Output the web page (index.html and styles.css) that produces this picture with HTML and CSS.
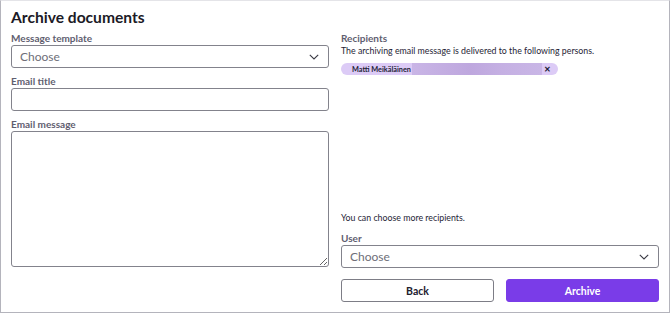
FILE: index.html
```html
<!DOCTYPE html>
<html lang="en">
<head>
<meta charset="utf-8">
<title>Archive documents</title>
<link rel="stylesheet" href="styles.css">
</head>
<body>
<div class="dialog">
  <h1 class="title">Archive documents</h1>
  <div class="columns">
    <div class="col">
      <div class="field">
        <label class="label">Message template</label>
        <div class="select">
          <span class="placeholder">Choose</span>
          <svg class="chev" width="10" height="6" viewBox="0 0 10 6"><path d="M0.8 0.8 L5 5 L9.2 0.8" fill="none" stroke="#3a3a44" stroke-width="1.1"/></svg>
        </div>
      </div>
      <div class="field">
        <label class="label">Email title</label>
        <input class="input" type="text">
      </div>
      <div class="field">
        <label class="label">Email message</label>
        <textarea class="textarea"></textarea>
      </div>
    </div>
    <div class="col right">
      <div class="top">
        <div class="label">Recipients</div>
        <p class="desc">The archiving email message is delivered to the following persons.</p>
        <div class="chip">
          <span class="chip-name">Matti Meikäläinen</span>
          <span class="chip-mail"></span>
          <span class="chip-x">✕</span>
        </div>
      </div>
      <div class="bottom">
        <p class="desc more">You can choose more recipients.</p>
        <div class="field">
          <label class="label">User</label>
          <div class="select">
            <span class="placeholder">Choose</span>
            <svg class="chev" width="10" height="6" viewBox="0 0 10 6"><path d="M0.8 0.8 L5 5 L9.2 0.8" fill="none" stroke="#3a3a44" stroke-width="1.1"/></svg>
          </div>
        </div>
        <div class="buttons">
          <button class="btn back">Back</button>
          <button class="btn primary">Archive</button>
        </div>
      </div>
    </div>
  </div>
</div>
</body>
</html>
```
FILE: styles.css
```css
* { box-sizing: border-box; }
html, body { margin: 0; padding: 0; background: #fff; }
body { font-family: Lato, "Noto Sans", sans-serif; color: #1f1d2b; }

.dialog {
  width: 670px;
  height: 313px;
  border: 1px solid #b4b4bc;
  border-top-color: #e4e4e8;
  padding: 6px 10px 10px 10px;
  display: flex;
  flex-direction: column;
}

.title {
  margin: 0 0 4px 0;
  font-size: 15.6px;
  line-height: 20px;
  font-weight: 700;
  color: #1b1a26;
}

.columns {
  flex: 1;
  display: grid;
  grid-template-columns: 318px 318px;
  column-gap: 12px;
}

.col { display: flex; flex-direction: column; }
.right { justify-content: space-between; }

.field { display: flex; flex-direction: column; margin-bottom: 6px; }

.label {
  display: block;
  font-size: 10px;
  line-height: 14px;
  font-weight: 700;
  color: #5f5e70;
}

.select {
  height: 23px;
  border: 1px solid #83838c;
  border-radius: 3px;
  display: flex;
  align-items: center;
  justify-content: space-between;
  padding: 0 9px 0 8px;
}
.placeholder { font-size: 12px; color: #6e6e78; }
.chev { display: block; }

.input {
  display: block;
  height: 23px;
  border: 1px solid #83838c;
  border-radius: 3px;
  margin: 0;
  padding: 0 8px;
  font: inherit;
}

.textarea {
  display: block;
  height: 136px;
  border: 1px solid #83838c;
  border-radius: 3px;
  margin: 0;
  padding: 4px 8px;
  font: inherit;
  resize: vertical;
}

.desc {
  margin: 0;
  font-size: 8.8px;
  line-height: 11px;
  color: #262435;
}

.chip {
  margin-top: 7px;
  width: 217px;
  height: 12px;
  border-radius: 6px;
  background: #dccbf6;
  display: flex;
  align-items: center;
  padding-left: 11px;
  overflow: hidden;
}
.chip-name {
  flex: 0 0 auto;
  font-size: 7.3px;
  font-weight: 700;
  color: #221c36;
  white-space: nowrap;
  margin-right: 1px;
}
.chip-mail {
  flex: 0 0 130px;
  height: 12px;
  background: linear-gradient(90deg, #c9b5e6 0%, #bea7de 45%, #c5b0e3 70%, #c9b6e6 100%);
}
.chip-x {
  font-size: 8px;
  font-weight: 700;
  color: #221c36;
  margin-left: 2px;
}

.more { margin-bottom: 8px; }
.bottom .field { margin-bottom: 11px; }

.buttons {
  display: grid;
  grid-template-columns: 153px 153px;
  justify-content: space-between;
}
.btn {
  height: 23px;
  border-radius: 3px;
  font-family: inherit;
  font-size: 10.5px;
  font-weight: 700;
  margin: 0;
  padding: 0;
}
.back { background: #fff; border: 1px solid #7d7d86; color: #22202e; }
.primary { background: #7a3ce8; border: 1px solid #7a3ce8; color: #fff; }
```
